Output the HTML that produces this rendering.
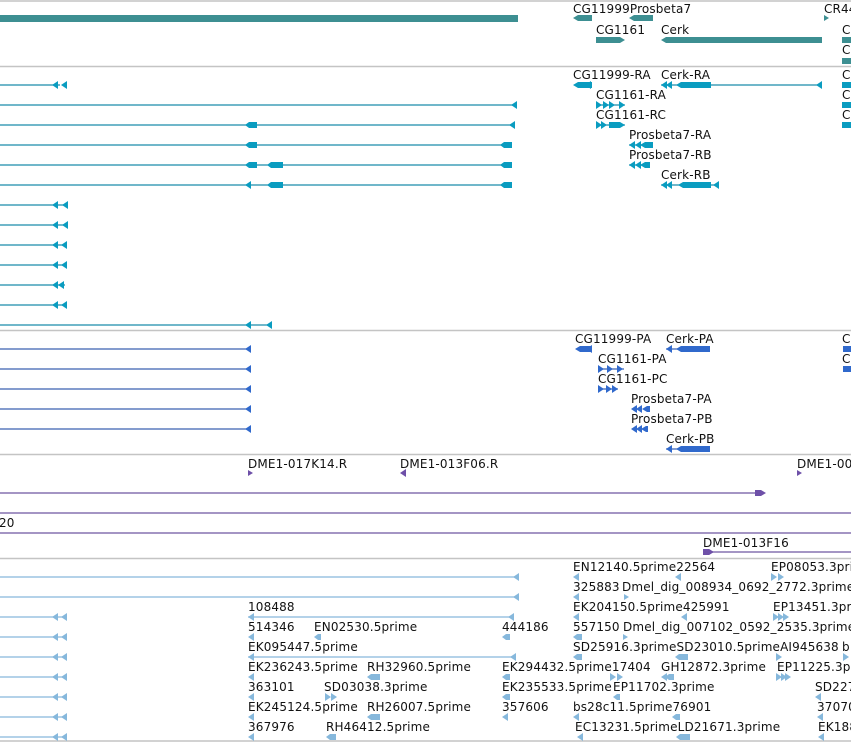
<!DOCTYPE html>
<html><head><meta charset="utf-8"><style>
html,body{margin:0;padding:0;background:#fff;}
svg{display:block}
text{font-family:"DejaVu Sans","Liberation Sans",sans-serif;font-size:12px;letter-spacing:0.15px;fill:#111;}
</style></head><body>
<svg width="851" height="742" viewBox="0 0 851 742" xmlns="http://www.w3.org/2000/svg">
<defs>
<path id="la" d="M0 0L6-4V4Z"/>
<path id="ra" d="M6 0L0-4V4Z"/>
<path id="sra" d="M5 0L0-3V3Z"/>
</defs>
<g stroke="#c4c4c4" stroke-width="1.5">
<line x1="0" y1="1" x2="851" y2="1"/>
<line x1="0" y1="66.5" x2="851" y2="66.5"/>
<line x1="0" y1="330.5" x2="851" y2="330.5"/>
<line x1="0" y1="454.5" x2="851" y2="454.5"/>
<line x1="0" y1="558.5" x2="851" y2="558.5"/>
<line x1="0" y1="741" x2="851" y2="741"/>
</g>

<g fill="#3d8f92">
<rect x="0" y="15" width="518" height="7"/>
<path d="M573 18l5-3h14v6h-14z"/>
<path d="M629 18l5-3h19v6h-19z"/>
<use href="#sra" x="824" y="18"/>
<path d="M596 37h24l5 3-5 3h-24z"/>
<path d="M661 40l5-3h156v6h-156z"/>
<rect x="842" y="37" width="9" height="6"/>
<rect x="842" y="58" width="9" height="6"/>
</g>
<text x="573" y="13">CG11999Prosbeta7</text>
<text x="824" y="13">CR44</text>
<text x="596" y="34">CG1161</text>
<text x="661" y="34">Cerk</text>
<text x="842" y="34">C</text>
<text x="842" y="54">C</text>

<g stroke="#1a8cab" stroke-width="1.2">
<line x1="0" y1="85" x2="60" y2="85"/>
<line x1="0" y1="105" x2="517" y2="105"/>
<line x1="0" y1="125" x2="515" y2="125"/>
<line x1="0" y1="145" x2="512" y2="145"/>
<line x1="0" y1="165" x2="512" y2="165"/>
<line x1="0" y1="185" x2="512" y2="185"/>
<line x1="0" y1="205" x2="65" y2="205"/>
<line x1="0" y1="225" x2="65" y2="225"/>
<line x1="0" y1="245" x2="65" y2="245"/>
<line x1="0" y1="265" x2="65" y2="265"/>
<line x1="0" y1="285" x2="65" y2="285"/>
<line x1="0" y1="305" x2="65" y2="305"/>
<line x1="0" y1="325" x2="270" y2="325"/>
<line x1="661" y1="85" x2="822" y2="85"/>
<line x1="596" y1="105" x2="625" y2="105"/>
<line x1="596" y1="125" x2="625" y2="125"/>
<line x1="629" y1="145" x2="653" y2="145"/>
<line x1="629" y1="165" x2="650" y2="165"/>
<line x1="661" y1="185" x2="719" y2="185"/>
</g>
<g fill="#0a9cc0">
<use href="#la" x="52" y="85"/><use href="#la" x="61" y="85"/>
<use href="#la" x="511" y="105"/>
<path d="M245 125l4-3h8v6h-8z"/><use href="#la" x="509" y="125"/>
<path d="M245 145l4-3h8v6h-8z"/><path d="M500 145l4-3h8v6h-8z"/>
<path d="M245 165l4-3h8v6h-8z"/><path d="M267 165l4-3h12v6h-12z"/><path d="M500 165l4-3h8v6h-8z"/>
<use href="#la" x="245" y="185"/><path d="M267 185l4-3h12v6h-12z"/><path d="M500 185l4-3h8v6h-8z"/>
<use href="#la" x="52" y="205"/><use href="#la" x="62" y="205"/>
<use href="#la" x="52" y="225"/><use href="#la" x="62" y="225"/>
<use href="#la" x="52" y="245"/><use href="#la" x="61" y="245"/>
<use href="#la" x="52" y="265"/><use href="#la" x="61" y="265"/>
<use href="#la" x="52" y="285"/><use href="#la" x="58" y="285"/>
<use href="#la" x="52" y="305"/><use href="#la" x="61" y="305"/>
<use href="#la" x="245" y="325"/><use href="#la" x="266" y="325"/>
<path d="M573 85l5-3h14v6h-14z"/><use href="#la" x="585" y="85"/>
<use href="#la" x="661" y="85"/><use href="#la" x="666" y="85"/><path d="M676 85l5-3h30v6h-30z"/><use href="#la" x="816" y="85"/>
<use href="#ra" x="596" y="105"/><use href="#ra" x="603" y="105"/><use href="#ra" x="609" y="105"/><use href="#ra" x="619" y="105"/>
<use href="#ra" x="596" y="125"/><use href="#ra" x="601" y="125"/><path d="M609 122h11l5 3-5 3h-11z"/>
<use href="#la" x="629" y="145"/><use href="#la" x="635" y="145"/><path d="M640 145l5-3h8v6h-8z"/>
<use href="#la" x="629" y="165"/><use href="#la" x="635" y="165"/><path d="M640 165l5-3h5v6h-5z"/>
<use href="#la" x="661" y="185"/><use href="#la" x="666" y="185"/><path d="M678 185l5-3h28v6h-28z"/><use href="#la" x="713" y="185"/>
<rect x="842" y="82" width="9" height="6"/><rect x="842" y="102" width="9" height="6"/><rect x="842" y="122" width="9" height="6"/>
</g>
<text x="573" y="79">CG11999-RA</text><text x="661" y="79">Cerk-RA</text><text x="842" y="79">C</text>
<text x="596" y="99">CG1161-RA</text><text x="842" y="99">C</text>
<text x="596" y="119">CG1161-RC</text><text x="842" y="119">C</text>
<text x="629" y="139">Prosbeta7-RA</text>
<text x="629" y="159">Prosbeta7-RB</text>
<text x="661" y="179">Cerk-RB</text>

<g stroke="#3a62b0" stroke-width="1.2">
<line x1="0" y1="349" x2="248" y2="349"/>
<line x1="0" y1="369" x2="248" y2="369"/>
<line x1="0" y1="389" x2="248" y2="389"/>
<line x1="0" y1="409" x2="248" y2="409"/>
<line x1="0" y1="429" x2="248" y2="429"/>
<line x1="666" y1="349" x2="710" y2="349"/>
<line x1="598" y1="369" x2="624" y2="369"/>
<line x1="598" y1="389" x2="618" y2="389"/>
<line x1="666" y1="449" x2="710" y2="449"/>
</g>
<g fill="#3069cc">
<use href="#la" x="245" y="349"/><use href="#la" x="245" y="369"/><use href="#la" x="245" y="389"/><use href="#la" x="245" y="409"/><use href="#la" x="245" y="429"/>
<path d="M575 349l5-3h12v6h-12z"/><use href="#la" x="586" y="349"/>
<use href="#la" x="666" y="349"/><path d="M676 349l5-3h29v6h-29z"/>
<use href="#ra" x="598" y="369"/><use href="#ra" x="607" y="369"/><use href="#ra" x="617" y="369"/>
<use href="#ra" x="598" y="389"/><use href="#ra" x="606" y="389"/><use href="#ra" x="612" y="389"/>
<use href="#la" x="631" y="409"/><use href="#la" x="636" y="409"/><path d="M642 409l5-3h3v6h-3z"/>
<use href="#la" x="631" y="429"/><use href="#la" x="636" y="429"/><path d="M641 429l5-3h2v6h-2z"/>
<use href="#la" x="666" y="449"/><path d="M676 449l5-3h29v6h-29z"/>
<rect x="843" y="346" width="8" height="6"/><rect x="843" y="366" width="8" height="6"/>
</g>
<text x="575" y="343">CG11999-PA</text><text x="666" y="343">Cerk-PA</text><text x="842" y="343">C</text>
<text x="598" y="363">CG1161-PA</text><text x="842" y="363">C</text>
<text x="598" y="383">CG1161-PC</text>
<text x="631" y="403">Prosbeta7-PA</text>
<text x="631" y="423">Prosbeta7-PB</text>
<text x="666" y="443">Cerk-PB</text>

<g stroke="#6e56a0" stroke-width="1.2">
<line x1="0" y1="493" x2="760" y2="493"/>
<line x1="0" y1="513" x2="851" y2="513"/>
<line x1="0" y1="533" x2="851" y2="533"/>
<line x1="703" y1="552" x2="851" y2="552"/>
</g>
<g fill="#6e50a8">
<use href="#sra" x="248" y="473"/><use href="#la" x="400" y="473"/><use href="#sra" x="797" y="473"/>
<path d="M755 490h6l5 3-5 3h-6z"/>
<path d="M703 549h6l4 3-4 3h-6z"/><use href="#sra" x="709" y="552"/>
</g>
<text x="248" y="468">DME1-017K14.R</text>
<text x="400" y="468">DME1-013F06.R</text>
<text x="797" y="468">DME1-00</text>
<text x="-1" y="527">20</text>
<text x="703" y="547">DME1-013F16</text>

<g stroke="#86b8dc" stroke-width="1.2">
<line x1="0" y1="577" x2="518" y2="577"/>
<line x1="0" y1="597" x2="518" y2="597"/>
<line x1="0" y1="617" x2="65" y2="617"/><line x1="248" y1="617" x2="514" y2="617"/>
<line x1="0" y1="637" x2="65" y2="637"/>
<line x1="0" y1="657" x2="65" y2="657"/><line x1="248" y1="657" x2="516" y2="657"/>
<line x1="0" y1="677" x2="65" y2="677"/>
<line x1="0" y1="697" x2="65" y2="697"/>
<line x1="0" y1="717" x2="65" y2="717"/>
<line x1="0" y1="737" x2="65" y2="737"/>
</g>
<g fill="#86b8dc">
<use href="#la" x="513" y="577"/><use href="#la" x="513" y="597"/>
<use href="#la" x="52" y="617"/><use href="#la" x="61" y="617"/><use href="#la" x="248" y="617"/><use href="#la" x="508" y="617"/>
<use href="#la" x="52" y="637"/><use href="#la" x="61" y="637"/>
<use href="#la" x="52" y="657"/><use href="#la" x="61" y="657"/><use href="#la" x="248" y="657"/><use href="#la" x="510" y="657"/>
<use href="#la" x="52" y="677"/><use href="#la" x="61" y="677"/>
<use href="#la" x="52" y="697"/><use href="#la" x="61" y="697"/>
<use href="#la" x="52" y="717"/><use href="#la" x="61" y="717"/>
<use href="#la" x="52" y="737"/><use href="#la" x="61" y="737"/>
<use href="#la" x="573" y="577"/><use href="#la" x="675" y="577"/><use href="#ra" x="771" y="577"/><use href="#ra" x="778" y="577"/>
<use href="#la" x="573" y="597"/><use href="#sra" x="624" y="597"/>
<use href="#la" x="573" y="617"/><use href="#la" x="681" y="617"/><use href="#ra" x="773" y="617"/><use href="#ra" x="778" y="617"/><use href="#ra" x="783" y="617"/>
<use href="#la" x="248" y="637"/><path d="M314 637l4-3h3v6h-3z"/><path d="M502 637l4-3h4v6h-4z"/><path d="M573 637l4-3h5v6h-5z"/><use href="#sra" x="623" y="637"/>
<path d="M573 657l4-3h5v6h-5z"/><path d="M675 657l4-3h9v6h-9z"/><use href="#ra" x="776" y="657"/><use href="#ra" x="843" y="657"/>
<use href="#la" x="248" y="677"/><path d="M367 677l4-3h9v6h-9z"/><path d="M502 677l4-3h4v6h-4z"/><use href="#ra" x="610" y="677"/><use href="#ra" x="617" y="677"/><use href="#la" x="661" y="677"/><path d="M665 677l4-3h5v6h-5z"/><use href="#ra" x="776" y="677"/><use href="#ra" x="781" y="677"/><use href="#ra" x="785" y="677"/>
<use href="#la" x="248" y="697"/><use href="#ra" x="325" y="697"/><use href="#ra" x="331" y="697"/><path d="M502 697l4-3h4v6h-4z"/><path d="M613 697l4-3h3v6h-3z"/><use href="#la" x="815" y="697"/>
<use href="#la" x="248" y="717"/><path d="M367 717l4-3h9v6h-9z"/><use href="#la" x="502" y="717"/><use href="#la" x="573" y="717"/><path d="M672 717l4-3h4v6h-4z"/><use href="#la" x="817" y="717"/>
<use href="#la" x="248" y="737"/><path d="M326 737l4-3h6v6h-6z"/><use href="#la" x="577" y="737"/><path d="M676 737l4-3h10v6h-10z"/><use href="#la" x="818" y="737"/>
</g>
<text x="573" y="571">EN12140.5prime22564</text><text x="771" y="571">EP08053.3prime</text>
<text x="573" y="591">325883</text><text x="622" y="591">Dmel_dig_008934_0692_2772.3prime</text>
<text x="248" y="611">108488</text><text x="573" y="611">EK204150.5prime425991</text><text x="773" y="611">EP13451.3prime</text>
<text x="248" y="631">514346</text><text x="314" y="631">EN02530.5prime</text><text x="502" y="631">444186</text><text x="573" y="631">557150</text><text x="623" y="631">Dmel_dig_007102_0592_2535.3prime</text>
<text x="248" y="651">EK095447.5prime</text><text x="573" y="651">SD25916.3primeSD23010.5primeAI945638</text><text x="842" y="651">b</text>
<text x="248" y="671">EK236243.5prime</text><text x="367" y="671">RH32960.5prime</text><text x="502" y="671">EK294432.5prime17404</text><text x="661" y="671">GH12872.3prime</text><text x="777" y="671">EP11225.3prime</text>
<text x="248" y="691">363101</text><text x="324" y="691">SD03038.3prime</text><text x="502" y="691">EK235533.5prime</text><text x="613" y="691">EP11702.3prime</text><text x="815" y="691">SD227</text>
<text x="248" y="711">EK245124.5prime</text><text x="367" y="711">RH26007.5prime</text><text x="502" y="711">357606</text><text x="573" y="711">bs28c11.5prime76901</text><text x="817" y="711">37070</text>
<text x="248" y="731">367976</text><text x="326" y="731">RH46412.5prime</text><text x="575" y="731">EC13231.5primeLD21671.3prime</text><text x="818" y="731">EK188</text>
</svg>
</body></html>
